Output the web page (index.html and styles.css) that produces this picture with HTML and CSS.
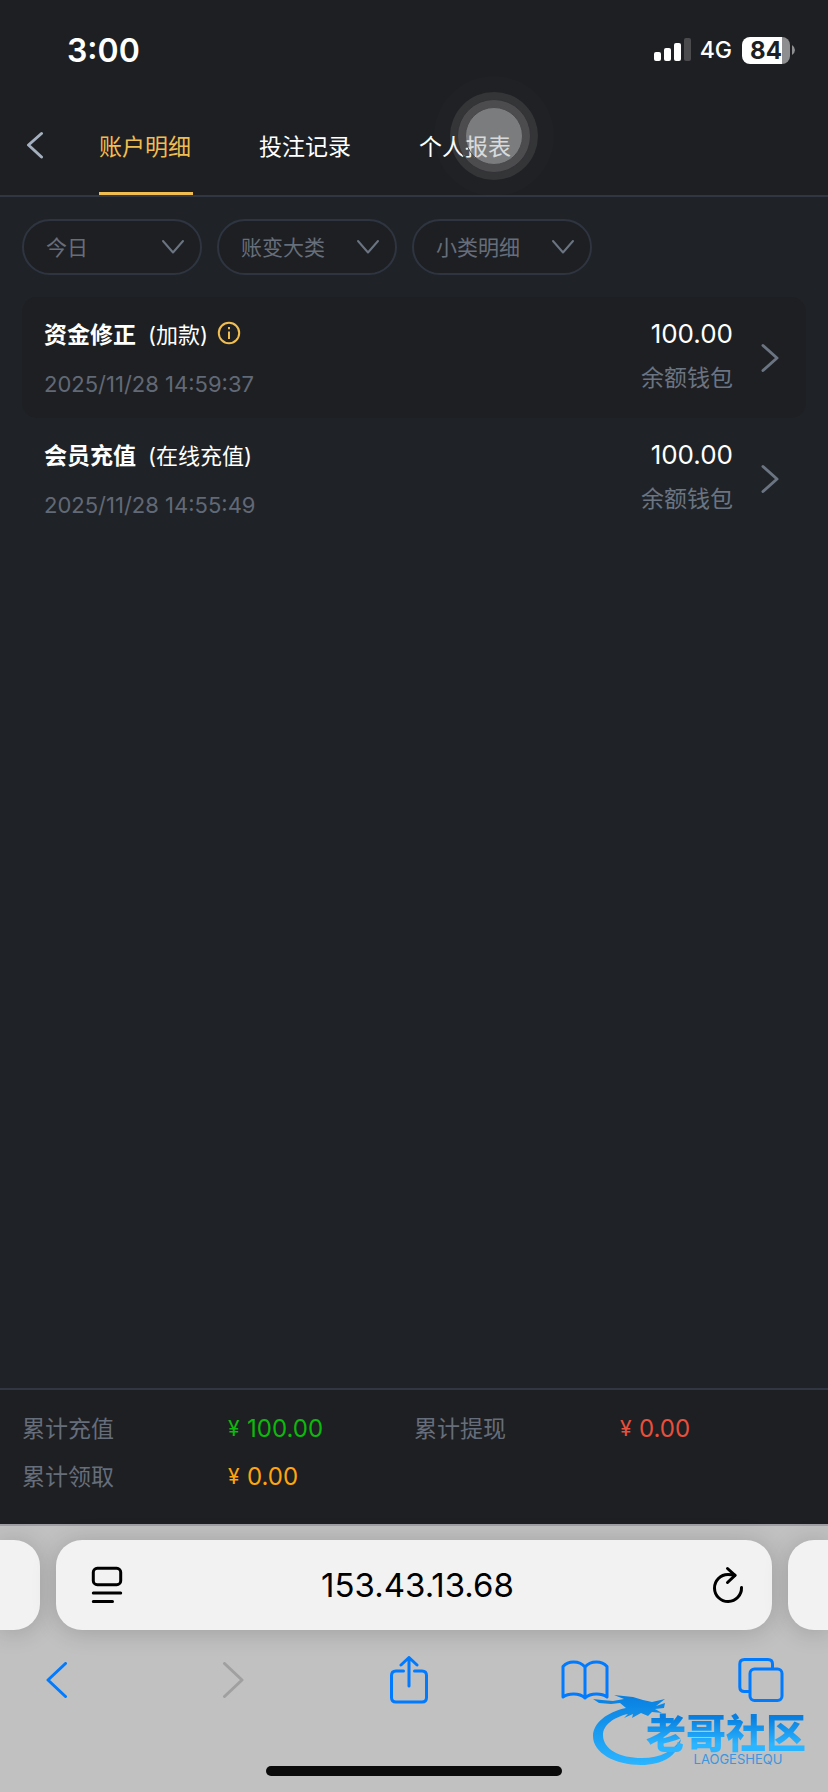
FILE: index.html
```html
<!DOCTYPE html>
<html lang="zh-CN">
<head>
<meta charset="utf-8">
<meta name="viewport" content="width=device-width, initial-scale=1">
<title>账户明细</title>
<link rel="stylesheet" href="styles.css">
</head>
<body>
<div class="screen">
  <div class="status">
    <time class="status-time">3:00</time>
    <div class="status-right">
      <svg class="signal" viewBox="0 0 37 24" aria-hidden="true">
        <rect x="0" y="14" width="7" height="9" rx="2"/><rect x="10" y="10" width="7" height="13" rx="2"/><rect x="20" y="5" width="7" height="18" rx="2"/><rect class="signal-off" x="30" y="0" width="7" height="23" rx="2"/>
      </svg>
      <span class="network">4G</span>
      <span class="battery"><span class="battery-body">84</span><svg class="battery-tip" viewBox="0 0 3 10" aria-hidden="true"><path d="M0 0Q3 2 3 5T0 10Z"/></svg></span>
    </div>
  </div>

  <header class="header">
    <button class="back" aria-label="返回"><svg viewBox="0 0 18 28" aria-hidden="true"><path d="M15.500 2.500 2.500 14 15.500 26"/></svg></button>
    <nav class="tabs">
      <a class="tab tab-active" href="#account">账户明细</a>
      <a class="tab" href="#bets">投注记录</a>
      <a class="tab" href="#report">个人报表</a>
    </nav>
  </header>

  <main class="content">
    <form class="filters">
      <div class="filter">
        <select class="filter-select" aria-label="日期"><option>今日</option></select>
        <svg class="filter-arrow" viewBox="0 0 24 16" aria-hidden="true"><path d="M2 2 12 13.500 22 2"/></svg>
      </div>
      <div class="filter">
        <select class="filter-select" aria-label="账变大类"><option>账变大类</option></select>
        <svg class="filter-arrow" viewBox="0 0 24 16" aria-hidden="true"><path d="M2 2 12 13.500 22 2"/></svg>
      </div>
      <div class="filter">
        <select class="filter-select" aria-label="小类明细"><option>小类明细</option></select>
        <svg class="filter-arrow" viewBox="0 0 24 16" aria-hidden="true"><path d="M2 2 12 13.500 22 2"/></svg>
      </div>
    </form>

    <ul class="records">
      <li class="record">
        <div class="record-main">
          <div class="record-title"><strong>资金修正</strong><span class="record-kind">(加款)</span>
            <svg class="info" viewBox="0 0 24 24" aria-hidden="true"><circle cx="12" cy="12" r="10.200"/><path d="M12 10.500V18"/><path d="M12 6V8.200"/></svg>
          </div>
          <time class="record-time">2025/11/28 14:59:37</time>
        </div>
        <div class="record-side"><span class="amount">100.00</span><span class="wallet">余额钱包</span></div>
        <svg class="record-arrow" viewBox="0 0 18 30" aria-hidden="true"><path d="M2 2.500 16 15 2 27.500"/></svg>
      </li>
      <li class="record">
        <div class="record-main">
          <div class="record-title"><strong>会员充值</strong><span class="record-kind">(在线充值)</span></div>
          <time class="record-time">2025/11/28 14:55:49</time>
        </div>
        <div class="record-side"><span class="amount">100.00</span><span class="wallet">余额钱包</span></div>
        <svg class="record-arrow" viewBox="0 0 18 30" aria-hidden="true"><path d="M2 2.500 16 15 2 27.500"/></svg>
      </li>
    </ul>
  </main>

  <dl class="summary">
    <div class="total"><dt>累计充值</dt><dd class="green"><span class="yen">¥</span>100.00</dd></div>
    <div class="total"><dt>累计提现</dt><dd class="red"><span class="yen">¥</span>0.00</dd></div>
    <div class="total"><dt>累计领取</dt><dd class="orange"><span class="yen">¥</span>0.00</dd></div>
  </dl>

  <footer class="browser">
    <div class="address-row">
      <div class="stub stub-left"></div>
      <div class="address">
        <button class="icon-button" aria-label="页面设置"><svg class="page-icon" viewBox="0 0 30 36" aria-hidden="true"><rect x="1.300" y="1.300" width="27.400" height="16.400" rx="4"/><path d="M1.300 26H28.700M1.300 34.500H20.500"/></svg></button>
        <span class="url">153.43.13.68</span>
        <button class="icon-button" aria-label="刷新"><svg class="reload-icon" viewBox="0 0 30 36" aria-hidden="true"><path d="M22 8.300Q19 7.500 15 7.500A13.500 13.500 0 1 0 28.500 20.500"/><path d="M14.500 1.500 22 8.300 14.500 15.500"/></svg></button>
      </div>
      <div class="stub stub-right"></div>
    </div>
    <nav class="toolbar">
      <button class="tool" aria-label="后退"><svg class="nav-icon" viewBox="0 0 22 36" aria-hidden="true"><path d="M19.500 1.500 2 18 19.500 34.500"/></svg></button>
      <button class="tool tool-off" aria-label="前进" disabled><svg class="nav-icon" viewBox="0 0 22 36" aria-hidden="true"><path d="M2.500 1.500 20 18 2.500 34.500"/></svg></button>
      <button class="tool" aria-label="分享"><svg class="share-icon" viewBox="0 0 40 48" aria-hidden="true"><path d="M14.500 15H7Q2.500 15 2.500 19.500V41.500Q2.500 46 7 46H33Q37.500 46 37.500 41.500V19.500Q37.500 15 33 15H25.500"/><path d="M20 30V1.500M12 9 20 1.500 28 9"/></svg></button>
      <button class="tool" aria-label="书签"><svg class="book-icon" viewBox="0 0 48 40" aria-hidden="true"><path d="M24 38V7Q20 2 12.500 2 6 2 2 6.500V37Q6 34 12.500 34 20 34 24 38 28 34 35.500 34 42 34 46 37V6.500Q42 2 35.500 2 28 2 24 7"/></svg></button>
      <button class="tool" aria-label="标签页"><svg class="pages-icon" viewBox="0 0 46 44" aria-hidden="true"><path d="M11 33.500H6.500Q1.800 33.500 1.800 29V6Q1.800 1.500 6.500 1.500H30Q34.500 1.500 34.500 6V10.500"/><rect x="12" y="11" width="32" height="31.500" rx="4.500"/></svg></button>
    </nav>
    <div class="home-bar"></div>

    <div class="logo">
      <svg class="dragon" viewBox="0 0 92 72" aria-hidden="true">
        <defs><linearGradient id="blue" x1="0" y1="0" x2="0" y2="1"><stop offset="0" stop-color="#087fe0"/><stop offset="1" stop-color="#2bb4ff"/></linearGradient></defs>
        <path fill="url(#blue)" d="M34 14C15 18 1 29 1 42 1 59 23 71 49 71 70 71 86 62 89 45 81 57 69 64 50 64 27 64 11 55 11 41 11 31 22 23 36 20L32 24 41 20 40 24 49 19 56 22 60 18 70 19 63 15 72 14 73 9 64 12 73 5 60 8 51 6 41 3 22 1 32 5 21 7 10 6 1 5 7 9 19 10 28 9Z"/>
      </svg>
      <div class="logo-words"><span class="logo-name">老哥社区</span><span class="logo-latin">LAOGESHEQU</span></div>
    </div>
  </footer>

  <div class="touch" aria-hidden="true"><div class="touch-ring"><div class="touch-mid"><div class="touch-dot"></div></div></div></div>
</div>
</body>
</html>
```
FILE: styles.css
```css
* { box-sizing: border-box; }
body {
  margin: 0;
  background: #1f2327;
  color: #fff;
  font-family: Inter, "Noto Sans CJK SC", sans-serif;
}
button { padding: 0; border: 0; background: none; color: inherit; font: inherit; }
svg { display: block; fill: none; stroke: currentColor; stroke-linecap: round; stroke-linejoin: round; }
.screen { position: relative; display: flex; flex-direction: column; min-height: 100vh; }

.status {
  display: flex;
  justify-content: space-between;
  align-items: center;
  height: 100px;
  padding: 0 33px 0 67px;
  background: #1e1f22;
}
.status-time { font-size: 32px; font-weight: 600; }
.status-right { display: flex; align-items: center; }
.signal { width: 37px; height: 24px; fill: #fff; stroke: none; }
.signal-off { fill: #4b4b4e; }
.network { margin: 0 10px 0 9px; font-size: 23px; font-weight: 500; }
.battery { display: flex; align-items: center; gap: 2px; }
.battery-body {
  width: 48px;
  border-radius: 8px;
  background: linear-gradient(90deg, #fff 40px, #8e8e90 40px);
  color: #1e1f22;
  font-size: 24px;
  font-weight: 700;
  line-height: 27px;
  text-align: center;
}
.battery-tip { width: 3px; height: 10px; fill: #8e8e90; stroke: none; }

.header {
  display: flex;
  height: 97px;
  border-bottom: 2px solid #303742;
  background: #1e1f22;
}
.back { width: 99px; padding: 0 0 5px 26px; color: #a4afbf; }
.back svg { width: 18px; height: 28px; stroke-width: 3; }
.tabs { display: flex; gap: 66px; }
.tab {
  width: 94px;
  padding-top: 1px;
  border-bottom: 3px solid transparent;
  color: #fff;
  font-size: 23px;
  line-height: 92px;
  text-decoration: none;
}
.tab-active { border-color: #f0bd50; color: #f0bd50; }

.content { flex: 1; padding: 22px; }
.filters { display: flex; gap: 15px; margin-bottom: 22px; }
.filter { display: grid; align-items: center; width: 180px; }
.filter-select {
  grid-area: 1 / 1;
  width: 100%;
  height: 56px;
  padding: 0 22px;
  border: 2px solid #2e3541;
  border-radius: 28px;
  appearance: none;
  background: #1e1f22;
  color: #666e7b;
  font: inherit;
  font-size: 21px;
}
.filter-arrow {
  grid-area: 1 / 1;
  justify-self: end;
  width: 24px;
  height: 16px;
  margin-right: 17px;
  color: #6b7482;
  stroke-width: 2;
  pointer-events: none;
}

.records { margin: 0; padding: 0; list-style: none; }
.record { display: flex; height: 121px; padding: 20px 27px 0 22px; border-radius: 15px; }
.record:nth-child(odd) { background: #1e1f22; }
.record-main { flex: 1; }
.record-title { display: flex; align-items: center; height: 32px; font-size: 23px; }
.record-kind { margin: 0 9px 0 12px; font-size: 22px; }
.info { width: 24px; height: 24px; color: #f0bd50; stroke-width: 2; stroke-linecap: butt; }
.record-time { display: block; margin-top: 19px; color: #626976; font-size: 22px; line-height: 32px; }
.record-side { display: flex; flex-direction: column; align-items: flex-end; }
.amount { font-size: 26px; line-height: 34px; }
.wallet { margin-top: 10px; color: #6b7482; font-size: 23px; line-height: 34px; }
.record-arrow { width: 18px; height: 30px; margin: 26px 0 0 28px; color: #6b7482; stroke-width: 3; }

.summary {
  display: grid;
  grid-template-columns: 1fr 1fr;
  margin: 0;
  padding: 15px 22px 23px;
  border-top: 2px solid #303742;
  background: #1e1f22;
  font-size: 23px;
  line-height: 48px;
}
.total { display: flex; }
.total dt { flex: 0 0 206px; color: #666e7b; }
.total dd { display: flex; margin: 0; font-size: 24px; }
.yen { width: 19px; font-size: 21px; }
.green { color: #0cb90c; }
.red { color: #e8503c; }
.orange { color: #ffa510; }

.browser {
  position: relative;
  height: 268px;
  padding-top: 14px;
  border-top: 2px solid #a09fa5;
  background: #c1c1c1;
}
.address-row { display: flex; gap: 16px; }
.address, .stub { height: 90px; border-radius: 26px; background: #f2f2f2; box-shadow: 0 2px 24px rgba(0, 0, 0, 0.18); }
.stub { width: 40px; }
.stub-left { border-radius: 0 26px 26px 0; }
.stub-right { border-radius: 26px 0 0 26px; }
.address {
  display: flex;
  flex: 1;
  align-items: center;
  justify-content: space-between;
  padding: 0 29px 0 36px;
  color: #000;
}
.page-icon, .reload-icon { width: 30px; height: 36px; stroke-width: 3; }
.page-icon, .reload-icon { overflow: visible; }
.url { font-size: 33px; }
.toolbar {
  display: flex;
  align-items: center;
  justify-content: space-between;
  height: 100px;
  padding: 0 41px 0 31px;
  color: #007aff;
}
.tool { display: grid; place-items: center; width: 52px; height: 52px; }
.tool-off { color: #a0a0a0; }
.nav-icon { width: 22px; height: 36px; stroke-width: 3; }
.share-icon { width: 40px; height: 48px; stroke-width: 3; }
.book-icon { width: 48px; height: 40px; stroke-width: 3; }
.pages-icon { width: 46px; height: 44px; stroke-width: 3; }
.home-bar { width: 296px; height: 10px; margin: 36px auto 0; border-radius: 5px; background: #0b0b0b; }

.logo { position: absolute; right: 18px; bottom: 26px; display: flex; align-items: flex-end; }
.dragon { width: 92px; height: 72px; stroke: none; }
.logo-words { display: flex; flex-direction: column; align-items: center; margin-left: -42px; }
.logo-name {
  padding: 0 4px;
  background: linear-gradient(#087fe0 20%, #2bb4ff 80%);
  background-clip: text;
  color: transparent;
  font-family: "Noto Sans CJK SC", sans-serif;
  font-size: 40px;
  font-weight: 900;
  line-height: 44px;
}
.logo-latin { margin-left: 24px; color: #3a96de; font-size: 13px; line-height: 13px; }

.touch, .touch-ring, .touch-mid, .touch-dot { display: grid; place-items: center; border-radius: 50%; }
.touch { position: absolute; top: 76px; left: 434px; width: 120px; height: 120px; background: rgba(255, 255, 255, 0.01); pointer-events: none; }
.touch-ring { width: 88px; height: 88px; background: rgba(195, 195, 200, 0.12); }
.touch-mid { width: 74px; height: 74px; border: 1px solid #333337; background: rgba(195, 192, 200, 0.17); }
.touch-dot { width: 58px; height: 58px; border: 1px solid #4a4a4d; background: rgba(186, 190, 190, 0.42); }
```
